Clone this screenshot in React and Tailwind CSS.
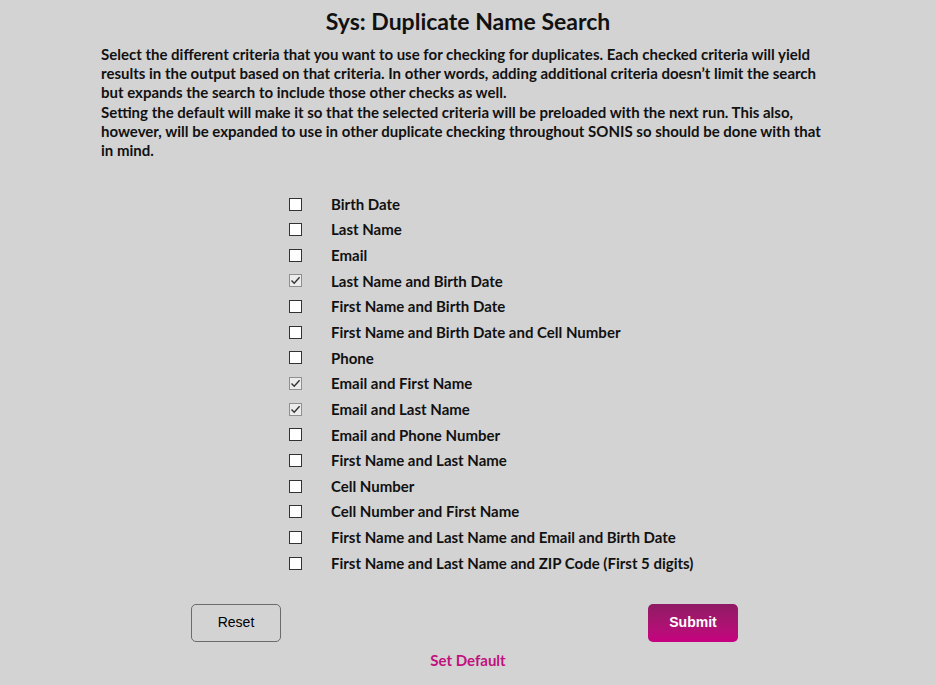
import React from "react";

const items = [
  ["Birth Date", false],
  ["Last Name", false],
  ["Email", false],
  ["Last Name and Birth Date", true],
  ["First Name and Birth Date", false],
  ["First Name and Birth Date and Cell Number", false],
  ["Phone", false],
  ["Email and First Name", true],
  ["Email and Last Name", true],
  ["Email and Phone Number", false],
  ["First Name and Last Name", false],
  ["Cell Number", false],
  ["Cell Number and First Name", false],
  ["First Name and Last Name and Email and Birth Date", false],
  ["First Name and Last Name and ZIP Code (First 5 digits)", false],
];

function Box({ checked }) {
  return checked ? (
    <div className="w-[13px] h-[13px] border border-[#8f8f8f] bg-[#ececec] flex items-center justify-center">
      <svg width="11" height="11" viewBox="0 0 11 11">
        <path d="M1.5 5.5 L4.2 8.3 L9.6 2.2" fill="none" stroke="#333" strokeWidth="1.4" />
      </svg>
    </div>
  ) : (
    <div className="w-[13px] h-[13px] border border-[#333] bg-white" />
  );
}

export default function App() {
  return (
    <div className="min-h-[685px] w-full bg-[#d3d3d3] text-[#111] font-['Lato','Noto_Sans',sans-serif]">
      <h1 className="text-center text-[23px] font-bold pt-[6px] leading-[30px]">Sys: Duplicate Name Search</h1>
      <div className="pl-[101px] pr-[100px] mt-[9px] text-[15px] font-bold leading-[19.2px]">
        <p>
          Select the different criteria that you want to use for checking for duplicates. Each checked criteria will yield results in the output based on that criteria. In other words, adding additional criteria doesn’t limit the search but expands the search to include those other checks as well.
        </p>
        <p>
          Setting the default will make it so that the selected criteria will be preloaded with the next run. This also, however, will be expanded to use in other duplicate checking throughout SONIS so should be done with that in mind.
        </p>
      </div>
      <div className="mt-[31px] pl-[289px] flex flex-col">
        {items.map(([label, c]) => (
          <div key={label} className="flex items-center h-[25.65px]">
            <Box checked={c} />
            <span className="ml-[29px] text-[15px] font-bold">{label}</span>
          </div>
        ))}
      </div>
      <div className="mt-[28px] flex justify-between pl-[191px] pr-[198px]">
        <button className="w-[90px] h-[38px] rounded-[5px] border border-[#6b6b6b] text-[14px] font-['Liberation_Sans',sans-serif] text-black">Reset</button>
        <button className="w-[90px] h-[38px] rounded-[5px] bg-gradient-to-b from-[#8e1a63] to-[#c6007f] text-white text-[14px] font-bold font-['Liberation_Sans',sans-serif]">Submit</button>
      </div>
      <div className="text-center mt-[7px] text-[15px] font-bold text-[#c0117f]">Set Default</div>
    </div>
  );
}
